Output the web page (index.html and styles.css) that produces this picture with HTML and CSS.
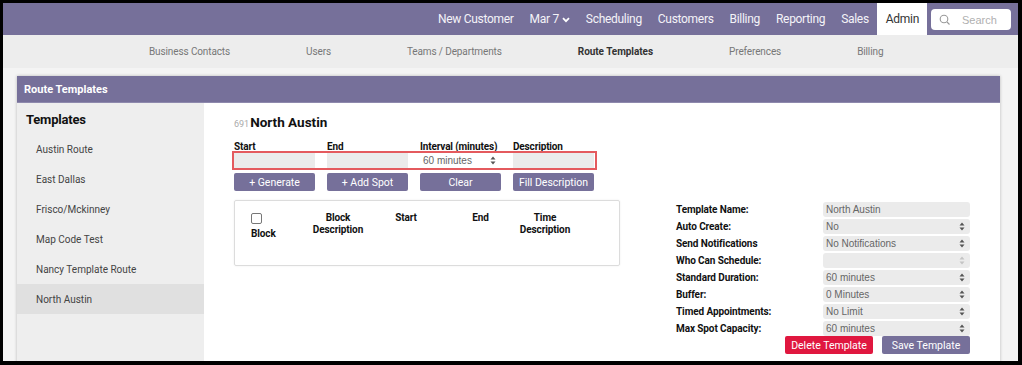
FILE: index.html
```html
<!DOCTYPE html>
<html lang="en">
<head>
<meta charset="utf-8">
<title>Route Templates</title>
<link rel="stylesheet" href="styles.css">
</head>
<body>
<div class="frame">
  <header class="topnav">
    <a class="nav-item">New Customer</a>
    <a class="nav-item">Mar 7 <svg class="chev" width="8" height="6" viewBox="0 0 8 6"><path d="M1 1.2 L4 4.2 L7 1.2" fill="none" stroke="#fff" stroke-width="1.8"/></svg></a>
    <a class="nav-item">Scheduling</a>
    <a class="nav-item">Customers</a>
    <a class="nav-item">Billing</a>
    <a class="nav-item">Reporting</a>
    <a class="nav-item">Sales</a>
    <a class="nav-item active">Admin</a>
    <div class="search">
      <svg width="12" height="12" viewBox="0 0 12 12"><circle cx="5" cy="5" r="3.8" fill="none" stroke="#999" stroke-width="1.1"/><path d="M8 8 L10.5 10.5" stroke="#999" stroke-width="1.1"/></svg>
      <span>Search</span>
    </div>
  </header>
  <nav class="subnav">
    <a>Business Contacts</a>
    <a>Users</a>
    <a>Teams / Departments</a>
    <a class="current">Route Templates</a>
    <a>Preferences</a>
    <a>Billing</a>
  </nav>
  <main class="page">
    <section class="panel">
      <div class="panel-head">Route Templates</div>
      <div class="panel-body">
        <aside class="sidebar">
          <h3>Templates</h3>
          <ul>
            <li>Austin Route</li>
            <li>East Dallas</li>
            <li>Frisco/Mckinney</li>
            <li>Map Code Test</li>
            <li>Nancy Template Route</li>
            <li class="selected">North Austin</li>
          </ul>
        </aside>
        <div class="content">
          <h2 class="title"><span class="tid">691</span>North Austin</h2>
          <div class="grid4 labels">
            <span>Start</span><span>End</span><span>Interval (minutes)</span><span>Description</span>
          </div>
          <div class="grid4 inputs">
            <div class="inp"></div>
            <div class="inp"></div>
            <div class="inp sel white">60 minutes<svg class="arr" width="6" height="9" viewBox="0 0 6 9"><path d="M3 0.5 L5.5 3.5 L0.5 3.5Z M3 8.5 L5.5 5.5 L0.5 5.5Z" fill="#555"/></svg></div>
            <div class="inp"></div>
          </div>
          <div class="grid4 buttons">
            <button class="btn">+ Generate</button>
            <button class="btn">+ Add Spot</button>
            <button class="btn">Clear</button>
            <button class="btn">Fill Description</button>
          </div>
          <div class="lower">
            <div class="table-box">
              <div class="thead">
                <div class="c1"><span class="cbox"></span><span>Block</span></div>
                <div class="c2">Block<br>Description</div>
                <div class="c3">Start</div>
                <div class="c4">End</div>
                <div class="c5">Time<br>Description</div>
              </div>
            </div>
            <div class="settings">
              <div class="form">
                <label>Template Name:</label><div class="inp">North Austin</div>
                <label>Auto Create:</label><div class="inp sel">No<svg class="arr" width="6" height="9" viewBox="0 0 6 9"><path d="M3 0.5 L5.5 3.5 L0.5 3.5Z M3 8.5 L5.5 5.5 L0.5 5.5Z" fill="#555"/></svg></div>
                <label>Send Notifications</label><div class="inp sel">No Notifications<svg class="arr" width="6" height="9" viewBox="0 0 6 9"><path d="M3 0.5 L5.5 3.5 L0.5 3.5Z M3 8.5 L5.5 5.5 L0.5 5.5Z" fill="#555"/></svg></div>
                <label>Who Can Schedule:</label><div class="inp sel"><svg class="arr" width="6" height="9" viewBox="0 0 6 9"><path d="M3 0.5 L5.5 3.5 L0.5 3.5Z M3 8.5 L5.5 5.5 L0.5 5.5Z" fill="#c4c4c4"/></svg></div>
                <label>Standard Duration:</label><div class="inp sel">60 minutes<svg class="arr" width="6" height="9" viewBox="0 0 6 9"><path d="M3 0.5 L5.5 3.5 L0.5 3.5Z M3 8.5 L5.5 5.5 L0.5 5.5Z" fill="#555"/></svg></div>
                <label>Buffer:</label><div class="inp sel">0 Minutes<svg class="arr" width="6" height="9" viewBox="0 0 6 9"><path d="M3 0.5 L5.5 3.5 L0.5 3.5Z M3 8.5 L5.5 5.5 L0.5 5.5Z" fill="#555"/></svg></div>
                <label>Timed Appointments:</label><div class="inp sel">No Limit<svg class="arr" width="6" height="9" viewBox="0 0 6 9"><path d="M3 0.5 L5.5 3.5 L0.5 3.5Z M3 8.5 L5.5 5.5 L0.5 5.5Z" fill="#555"/></svg></div>
                <label>Max Spot Capacity:</label><div class="inp sel">60 minutes<svg class="arr" width="6" height="9" viewBox="0 0 6 9"><path d="M3 0.5 L5.5 3.5 L0.5 3.5Z M3 8.5 L5.5 5.5 L0.5 5.5Z" fill="#555"/></svg></div>
              </div>
              <div class="actions">
                <button class="btn danger">Delete Template</button>
                <button class="btn">Save Template</button>
              </div>
            </div>
          </div>
        </div>
      </div>
    </section>
  </main>
</div>
</body>
</html>
```

FILE: styles.css
```css
* { box-sizing: border-box; }
html, body { margin: 0; padding: 0; }
body {
  background: #000;
  font-family: Roboto, "Liberation Sans", sans-serif;
  color: #222;
  height: 365px;
  overflow: hidden;
}
.frame {
  margin: 3px 4px 0 3px;
  height: 358px;
  background: #f4f4f4;
  overflow: hidden;
}

/* top navigation */
.topnav {
  height: 32px;
  background: #76709a;
  display: flex;
  justify-content: flex-end;
  align-items: stretch;
  padding-right: 7px;
}
.nav-item {
  display: flex;
  align-items: center;
  gap: 3px;
  padding: 0 8px;
  font-size: 12px;
  letter-spacing: -0.3px;
  color: #f4f3f8;
}
.nav-item .chev { margin-top: 1px; }
.nav-item.active {
  background: #fff;
  color: #333;
  padding: 0 8px 0 9px;
}
.search {
  margin: 6px 0 5px 4px;
  width: 80px;
  background: #fff;
  border-radius: 4px;
  display: flex;
  align-items: center;
  gap: 11px;
  padding-left: 8px;
  font-family: "Liberation Sans", Arial, sans-serif;
  font-size: 11px;
  color: #b0b0b0;
}

/* sub navigation */
.subnav {
  height: 33px;
  background: #ededed;
  display: flex;
  align-items: center;
  gap: 76px;
  padding-left: 146px;
  font-size: 10px;
  letter-spacing: -0.12px;
  color: #777;
}
.subnav .current { font-weight: 700; color: #333; letter-spacing: -0.05px; }

/* page */
.page { padding: 8px 18px 0 14px; }
.panel {
  background: #fff;
  box-shadow: 0 0 3px rgba(0,0,0,0.25);
}
.panel-head {
  height: 27px;
  background: #76709a;
  color: #fff;
  font-weight: 700;
  font-size: 11px;
  display: flex;
  align-items: center;
  padding-left: 7px;
  border-bottom: 1px solid #8e89ad;
}
.panel-body {
  display: flex;
  height: 300px;
}
.sidebar {
  width: 187px;
  background: #eeeeee;
}
.sidebar h3 {
  margin: 0;
  height: 31px;
  padding-top: 1px;
  line-height: 31px;
  padding-left: 9px;
  font-size: 13px;
  letter-spacing: -0.2px;
  font-weight: 700;
  color: #111;
}
.sidebar ul { list-style: none; margin: 0; padding: 0; }
.sidebar li {
  height: 30px;
  line-height: 30px;
  padding-top: 1px;
  padding-left: 19px;
  font-size: 10px;
  color: #444;
}
.sidebar li.selected { background: #e0e0e0; }

.content {
  flex: 1;
  padding: 10px 30px 0 29px;
}
.title {
  margin: 0 0 0 1px;
  height: 18px;
  line-height: 18px;
  font-size: 13.5px;
  font-weight: 700;
  color: #111;
}
.tid { font-size: 9px; font-weight: 400; color: #aaa; margin-right: 1px; }

.grid4 {
  display: grid;
  grid-template-columns: repeat(4, 81px);
  column-gap: 12px;
  width: 361px;
  margin-left: 1px;
}
.labels {
  margin-top: 10px;
  font-size: 10px;
  font-weight: 700;
  letter-spacing: -0.15px;
  line-height: 12px;
  color: #111;
}
.inputs {
  outline: 2px solid #e45a5e;
  height: 15px;
}
.inp {
  height: 15px;
  background: #ebebeb;
  border-radius: 3px;
  font-family: "Liberation Sans", Arial, sans-serif;
  font-size: 10px;
  color: #666;
  line-height: 15px;
  padding-left: 3px;
  position: relative;
}
.grid4 .inp { border-radius: 0; }
.inp.white { background: #fff; }
.inp .arr { position: absolute; right: 5px; top: 3px; }
.buttons { margin-top: 5px; }
.btn {
  height: 18px;
  border: 0;
  border-radius: 2px;
  background: #76709a;
  color: #fff;
  font-family: Roboto, sans-serif;
  font-size: 10.5px;
  padding: 0;
}
.btn.danger { background: #e0173f; }

.lower {
  display: flex;
  justify-content: space-between;
  margin-top: 9px;
}
.table-box {
  width: 386px;
  height: 66px;
  margin-left: 1px;
  border: 1px solid #dcdcdc;
  border-radius: 2px;
  box-shadow: 0 0 2px rgba(0,0,0,0.08);
}
.thead {
  display: flex;
  padding: 11px 0 0 16px;
  font-size: 10px;
  font-weight: 700;
  letter-spacing: -0.1px;
  line-height: 12px;
  color: #111;
}
.thead > div { text-align: center; }
.thead .c1 {
  width: 52px;
  text-align: left;
  display: flex;
  flex-direction: column;
  gap: 4px;
}
.cbox {
  display: block;
  width: 11px;
  height: 11px;
  border: 1px solid #777;
  border-radius: 2px;
  margin-top: 1px;
}
.thead .c2 { width: 70px; }
.thead .c3 { width: 66px; }
.thead .c4 { width: 59px; margin-left: 12px; }
.thead .c5 { width: 66px; margin-left: 2px; }

.settings {
  width: 294px;
  margin-top: 2px;
}
.form {
  display: grid;
  grid-template-columns: 147px 147px;
  row-gap: 2px;
}
.form label {
  font-size: 10px;
  font-weight: 700;
  line-height: 15px;
  letter-spacing: -0.1px;
  color: #111;
}
.actions {
  display: flex;
  justify-content: flex-end;
  gap: 9px;
  margin-top: 0;
}
.actions .btn { width: 88px; height: 18px; }
```
